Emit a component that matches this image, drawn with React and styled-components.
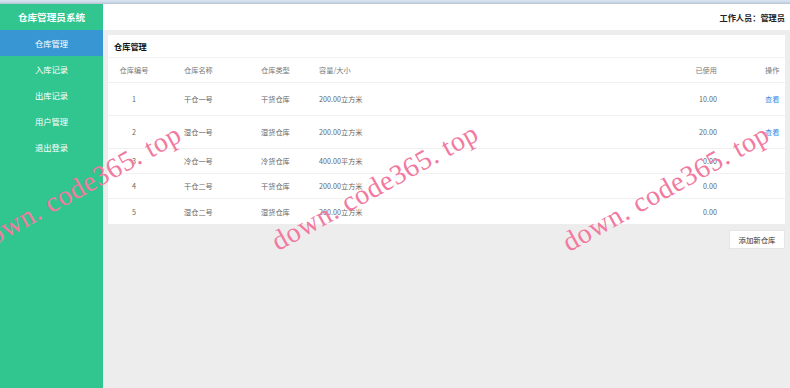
import React from 'react';
import styled, { createGlobalStyle } from 'styled-components';

const GlobalStyle = createGlobalStyle`
  html, body {
    margin: 0;
    padding: 0;
    background: #ededed;
    font-family: 'Noto Sans CJK SC', 'Noto Sans', sans-serif;
  }
  * {
    box-sizing: border-box;
  }
`;

const Page = styled.div`
  position: relative;
  width: 790px;
  height: 388px;
  overflow: hidden;
  display: flex;
  flex-direction: column;
`;

const TopStrip = styled.div`
  height: 4px;
  background: linear-gradient(#dbe6f1, #c3d3e4);
  border-bottom: 1px solid #b8c6d6;
`;

const Layout = styled.div`
  flex: 1;
  display: flex;
`;

const Sidebar = styled.div`
  width: 103px;
  background: #31c590;
  display: flex;
  flex-direction: column;
`;

const Brand = styled.div`
  height: 26px;
  display: flex;
  align-items: center;
  justify-content: center;
  color: #fff;
  font-size: 9.6px;
  font-weight: 700;
`;

const MenuItem = styled.div`
  height: 26px;
  display: flex;
  align-items: center;
  justify-content: center;
  color: #fff;
  font-size: 8.3px;
  background: ${(p) => (p.$active ? '#3896d3' : 'transparent')};
`;

const Main = styled.div`
  flex: 1;
  display: flex;
  flex-direction: column;
`;

const Header = styled.div`
  height: 26px;
  background: #fff;
  display: flex;
  align-items: center;
  justify-content: flex-end;
  padding-right: 5px;
  font-size: 8.2px;
  font-weight: 700;
  color: #222;
`;

const Body = styled.div`
  padding: 5px;
  display: flex;
  flex-direction: column;
  align-items: flex-end;
`;

const Card = styled.div`
  align-self: stretch;
  background: #fff;
`;

const CardTitle = styled.div`
  height: 23px;
  padding-left: 6px;
  display: flex;
  align-items: center;
  font-size: 8.2px;
  font-weight: 700;
  color: #111;
  border-bottom: 1px solid #f2f2f2;
`;

const Row = styled.div`
  display: grid;
  grid-template-columns: 52px 101px 58px 1fr 80px 68px;
  align-items: center;
  height: ${(p) => p.$h}px;
  border-bottom: ${(p) => (p.$last ? 'none' : '1px solid #f0f0f0')};
  font-size: 7.2px;
  line-height: 10px;
  color: ${(p) => (p.$head ? '#777' : '#666')};
`;

const Cell = styled.div`
  text-align: ${(p) => p.$align || 'left'};
  padding-left: ${(p) => p.$pl || 0}px;
`;

const Link = styled.span`
  color: #3a8ee6;
`;

const AddButton = styled.div`
  margin-top: 6px;
  width: 56px;
  height: 19px;
  background: #fff;
  border: 1px solid #e6e6e6;
  display: flex;
  align-items: center;
  justify-content: center;
  font-size: 7.4px;
  color: #333;
`;

const Watermark = styled.span`
  position: absolute;
  left: ${(p) => p.$x}px;
  top: ${(p) => p.$y}px;
  font-family: 'Liberation Serif', serif;
  font-size: 28px;
  line-height: 28px;
  letter-spacing: 0.6px;
  white-space: nowrap;
  color: #f27aa0;
  transform-origin: 0 25px;
  transform: rotate(-29deg);
  pointer-events: none;
`;

const rows = [
  { id: 1, name: '干仓一号', type: '干货仓库', size: '200.00立方米', used: '10.00', link: true },
  { id: 2, name: '湿仓一号', type: '湿货仓库', size: '200.00立方米', used: '20.00', link: true },
  { id: 3, name: '冷仓一号', type: '冷货仓库', size: '400.00平方米', used: '0.00' },
  { id: 4, name: '干仓二号', type: '干货仓库', size: '200.00立方米', used: '0.00' },
  { id: 5, name: '湿仓二号', type: '湿货仓库', size: '200.00立方米', used: '0.00' },
];

const menu = ['仓库管理', '入库记录', '出库记录', '用户管理', '退出登录'];

export default function App() {
  return (
    <Page>
      <GlobalStyle />
      <TopStrip />
      <Layout>
        <Sidebar>
          <Brand>仓库管理员系统</Brand>
          {menu.map((m, i) => (
            <MenuItem key={m} $active={i === 0}>
              {m}
            </MenuItem>
          ))}
        </Sidebar>
        <Main>
          <Header>工作人员：管理员</Header>
          <Body>
            <Card>
              <CardTitle>仓库管理</CardTitle>
              <Row $head $h={25}>
                <Cell $align="center">仓库编号</Cell>
                <Cell $pl={24}>仓库名称</Cell>
                <Cell>仓库类型</Cell>
                <Cell>容量/大小</Cell>
                <Cell $align="right">已使用</Cell>
                <Cell $pl={48}>操作</Cell>
              </Row>
              {rows.map((r, i) => (
                <Row key={r.id} $h={r.link ? 33 : 25} $last={i === rows.length - 1}>
                  <Cell $align="center">{r.id}</Cell>
                  <Cell $pl={24}>{r.name}</Cell>
                  <Cell>{r.type}</Cell>
                  <Cell>{r.size}</Cell>
                  <Cell $align="right">{r.used}</Cell>
                  <Cell $pl={48}>{r.link && <Link>查看</Link>}</Cell>
                </Row>
              ))}
            </Card>
            <AddButton>添加新仓库</AddButton>
          </Body>
        </Main>
      </Layout>
      <Watermark $x={-18} $y={229}>down. code365. top</Watermark>
      <Watermark $x={279} $y={228}>down. code365. top</Watermark>
      <Watermark $x={570} $y={229}>down. code365. top</Watermark>
    </Page>
  );
}
